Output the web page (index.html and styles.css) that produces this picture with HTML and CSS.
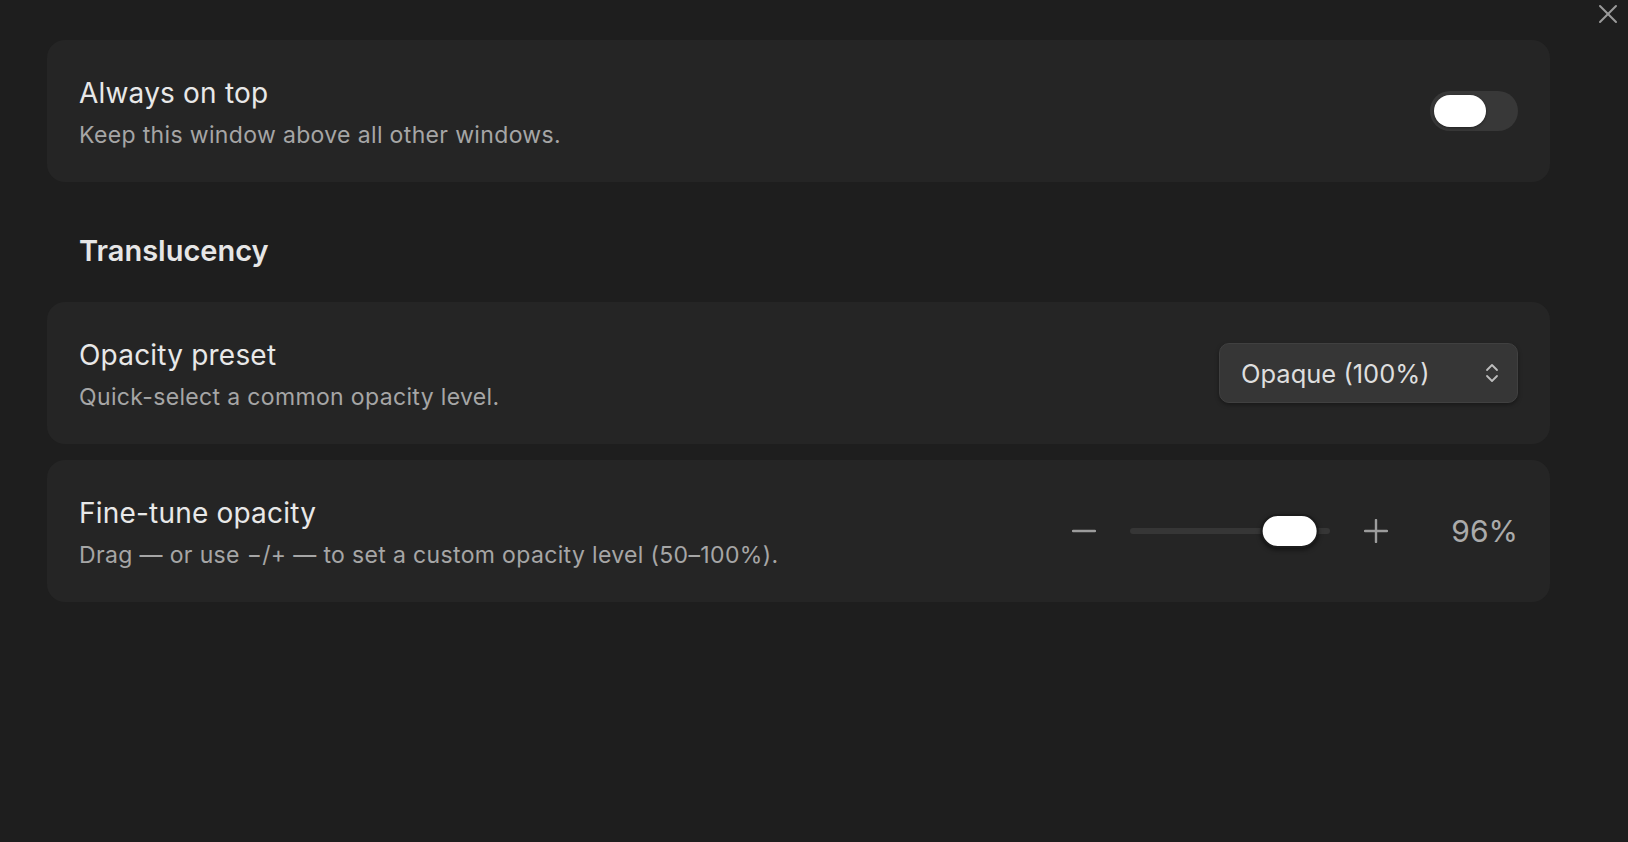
FILE: index.html
```html
<!DOCTYPE html>
<html lang="en">
<head>
    <meta charset="UTF-8">
    <title>Window Settings</title>
    <meta name="viewport" content="width=device-width, initial-scale=1.0">
    <link rel="stylesheet" href="styles.css">
</head>
<body>
    <button class="close-button" aria-label="Close">
        <svg viewBox="0 0 20 20" fill="none" stroke="currentColor" stroke-width="2" stroke-linecap="round"><line x1="2" y1="2" x2="18" y2="18"/><line x1="18" y1="2" x2="2" y2="18"/></svg>
    </button>
    <div class="settings">
        <div class="setting-card">
            <div class="setting-text">
                <div class="setting-title">Always on top</div>
                <div class="setting-desc">Keep this window above all other windows.</div>
            </div>
            <button class="toggle" aria-label="Always on top"><span class="toggle-knob"></span></button>
        </div>

        <h2 class="section-title">Translucency</h2>

        <div class="setting-card">
            <div class="setting-text">
                <div class="setting-title">Opacity preset</div>
                <div class="setting-desc">Quick-select a common opacity level.</div>
            </div>
            <div class="select">
                <span class="select-value">Opaque (100%)</span>
                <svg class="select-arrows" viewBox="0 0 14 20" fill="none" stroke="currentColor" stroke-width="1.8" stroke-linecap="round" stroke-linejoin="round"><polyline points="2 7 7 2 12 7"/><polyline points="2 13 7 18 12 13"/></svg>
            </div>
        </div>

        <div class="setting-card card-gap">
            <div class="setting-text">
                <div class="setting-title">Fine-tune opacity</div>
                <div class="setting-desc">Drag — or use −/+ — to set a custom opacity level (50–100%).</div>
            </div>
            <div class="slider-row">
                <button class="step-button" aria-label="Decrease">
                    <svg viewBox="0 0 24 24" fill="none" stroke="currentColor" stroke-width="2.4" stroke-linecap="round"><line x1="1" y1="12" x2="23" y2="12"/></svg>
                </button>
                <div class="slider">
                    <div class="slider-track"></div>
                    <div class="slider-thumb" style="left: 92%;"></div>
                </div>
                <button class="step-button" aria-label="Increase">
                    <svg viewBox="0 0 24 24" fill="none" stroke="currentColor" stroke-width="2.4" stroke-linecap="round"><line x1="1" y1="12" x2="23" y2="12"/><line x1="12" y1="1" x2="12" y2="23"/></svg>
                </button>
                <span class="slider-value">96%</span>
            </div>
        </div>
    </div>
</body>
</html>
```

FILE: styles.css
```css
body {
    margin: 0;
    background: #1e1e1e;
    font-family: 'Inter', 'Noto Sans', sans-serif;
    color: #e6e6e6;
    height: 100vh;
    position: relative;
}
button {
    font-family: inherit;
    background: none;
    border: none;
    padding: 0;
    cursor: pointer;
}
.close-button {
    position: absolute;
    top: 4px;
    right: 10px;
    width: 20px;
    height: 20px;
    color: #9a9a9a;
}
.close-button svg {
    width: 20px;
    height: 20px;
    display: block;
}
.settings {
    padding: 40px 78px 0 47px;
    display: flex;
    flex-direction: column;
}
.setting-card {
    background: #252525;
    border-radius: 18px;
    min-height: 142px;
    box-sizing: border-box;
    padding: 0 32px;
    display: flex;
    align-items: center;
    justify-content: space-between;
}
.card-gap {
    margin-top: 16px;
}
.setting-text {
    padding-top: 2px;
}
.setting-title {
    font-size: 28px;
    line-height: 36px;
    letter-spacing: 0.2px;
    color: #e8e8e8;
}
.setting-desc {
    margin-top: 9px;
    font-size: 23px;
    line-height: 30px;
    letter-spacing: 0.35px;
    color: #a6a6a6;
}
.section-title {
    margin: 51px 0 33px 32px;
    font-size: 29px;
    line-height: 36px;
    font-weight: 600;
    color: #e6e6e6;
}

/* switch */
.toggle {
    width: 88px;
    height: 40px;
    border-radius: 20px;
    background: #383838;
    display: flex;
    align-items: center;
    padding: 0 4px;
    box-sizing: border-box;
}
.toggle-knob {
    width: 52px;
    height: 32px;
    border-radius: 16px;
    background: #fff;
    box-shadow: 0 1px 3px rgba(0, 0, 0, 0.4);
}

/* dropdown */
.select {
    width: 299px;
    height: 60px;
    box-sizing: border-box;
    background: #363636;
    border: 1px solid #404040;
    border-radius: 10px;
    box-shadow: 0 2px 4px rgba(0, 0, 0, 0.35);
    display: flex;
    align-items: center;
    justify-content: space-between;
    padding: 0 18px 0 21px;
}
.select-value {
    font-size: 25.5px;
    color: #dedede;
}
.select-arrows {
    width: 14px;
    height: 20px;
    color: #bdbdbd;
}

/* slider */
.slider-row {
    display: flex;
    align-items: center;
}
.step-button {
    width: 24px;
    height: 24px;
    color: #9c9c9c;
}
.step-button svg {
    width: 24px;
    height: 24px;
    display: block;
}
.slider {
    position: relative;
    width: 200px;
    height: 34px;
    margin: 0 34px;
    display: flex;
    align-items: center;
}
.slider-track {
    width: 100%;
    height: 6px;
    border-radius: 3px;
    background: #363636;
}
.slider-thumb {
    position: absolute;
    top: 0;
    width: 58px;
    height: 34px;
    transform: translateX(calc(-58px * 0.92));
    box-sizing: border-box;
    border-radius: 17px;
    background: #fff;
    border: 2px solid #1c1c1c;
    box-shadow: 0 2px 4px rgba(0, 0, 0, 0.5);
}
.slider-value {
    width: 130px;
    text-align: right;
    font-size: 30px;
    color: #ababab;
}
```
